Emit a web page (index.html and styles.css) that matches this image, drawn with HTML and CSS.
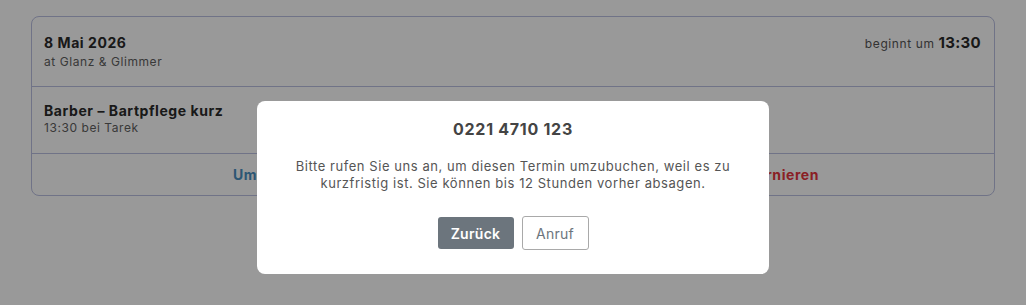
FILE: index.html
```html
<!DOCTYPE html>
<html lang="de">
<head>
<meta charset="utf-8">
<link rel="stylesheet" href="styles.css">
</head>
<body>
<main class="page">
  <section class="card">
    <div class="row row-head">
      <div class="col">
        <div class="title">8 Mai 2026</div>
        <div class="sub">at Glanz &amp; Glimmer</div>
      </div>
      <div class="starts">beginnt um <strong>13:30</strong></div>
    </div>
    <div class="row row-service">
      <div class="col">
        <div class="title">Barber – Bartpflege kurz</div>
        <div class="sub sub-tight">13:30 bei Tarek</div>
      </div>
    </div>
    <div class="actions">
      <button class="action action-blue">Umbuchen</button>
      <button class="action action-red">Termin stornieren</button>
    </div>
  </section>
</main>
<div class="overlay"></div>
<div class="modal" role="dialog">
  <h2 class="modal-title">0221 4710 123</h2>
  <p class="modal-text">Bitte rufen Sie uns an, um diesen Termin umzubuchen, weil es zu kurzfristig ist. Sie können bis 12 Stunden vorher absagen.</p>
  <div class="modal-buttons">
    <button class="btn btn-dark">Zurück</button>
    <button class="btn btn-outline">Anruf</button>
  </div>
</div>
</body>
</html>
```
FILE: styles.css
```css
* { box-sizing: border-box; }
html, body { margin: 0; padding: 0; }
body {
  background: #fff;
  font-family: Inter, "Open Sans", sans-serif;
  letter-spacing: 0.035em;
  color: #333;
  width: 1026px;
  height: 305px;
  overflow: hidden;
}
.page { padding: 16px 31px; }
.card {
  border: 1px solid #bbc0e2;
  border-radius: 8px;
  background: #fff;
}
.row {
  display: flex;
  justify-content: space-between;
  align-items: flex-start;
  border-bottom: 1px solid #bbc0e2;
}
.row-head { padding: 16px 13px 15px 12px; height: 70px; }
.row-service { padding: 14px 12px 15px 12px; height: 67px; }
.title {
  font-size: 14px;
  font-weight: 700;
  line-height: 20px;
  color: #2a2a2a;
}
.sub {
  font-size: 12px;
  line-height: 18px;
  color: #606060;
}
.sub-tight { line-height: 14px; }
.starts {
  font-size: 12px;
  color: #555;
  line-height: 20px;
  letter-spacing: 0.05em;
}
.starts strong {
  font-size: 15px;
  font-weight: 700;
  letter-spacing: 0.02em;
  color: #2a2a2a;
}
.actions {
  display: flex;
  height: 41px;
}
.action {
  flex: 1;
  background: none;
  border: 0;
  font-family: inherit;
  letter-spacing: 0.04em;
  font-size: 14px;
  font-weight: 700;
}
.action-blue { color: #4a90c2; }
.action-red { color: #e6343c; }
.overlay {
  position: fixed;
  inset: 0;
  background: rgba(0, 0, 0, 0.4);
}
.modal {
  position: fixed;
  top: 101px;
  left: 257px;
  width: 512px;
  height: 173px;
  background: #fff;
  border-radius: 8px;
  padding: 17px 20px 24px;
  text-align: center;
}
.modal-title {
  margin: 0;
  font-size: 16px;
  font-weight: 700;
  line-height: 22px;
  letter-spacing: 0.045em;
  color: #444;
}
.modal-text {
  margin: 18px 0 0;
  font-size: 13px;
  line-height: 17px;
  color: #555;
}
.modal-buttons {
  display: flex;
  justify-content: center;
  align-items: center;
  gap: 8px;
  margin-top: 24px;
}
.btn {
  font-family: inherit;
  font-size: 14px;
  border-radius: 3px;
  padding: 0;
  letter-spacing: 0.02em;
}
.btn-dark {
  background: #6c757d;
  color: #fff;
  border: 0;
  height: 32px;
  width: 76px;
  font-weight: 600;
}
.btn-outline {
  background: #fff;
  color: #6c757d;
  border: 1px solid #a9a9a9;
  height: 34px;
  width: 67px;
}
```
